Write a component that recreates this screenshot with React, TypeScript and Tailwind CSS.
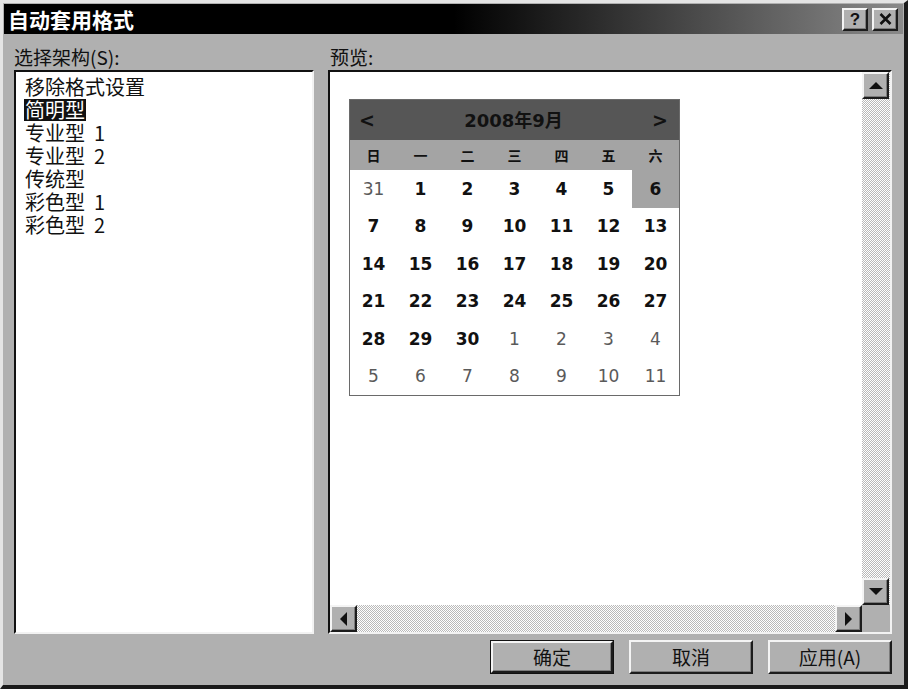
import React from 'react';

const cjk = "font-['Noto_Sans_CJK_SC',sans-serif]";
const verdana = "font-['DejaVu_Sans','Noto_Sans_CJK_SC',sans-serif]";

const schemes = ['移除格式设置', '简明型', '专业型 1', '专业型 2', '传统型', '彩色型 1', '彩色型 2'];
const weekDays = ['日', '一', '二', '三', '四', '五', '六'];

// [day, isCurrentMonth]
const weeks: [number, boolean][][] = [
  [[31, false], [1, true], [2, true], [3, true], [4, true], [5, true], [6, true]],
  [[7, true], [8, true], [9, true], [10, true], [11, true], [12, true], [13, true]],
  [[14, true], [15, true], [16, true], [17, true], [18, true], [19, true], [20, true]],
  [[21, true], [22, true], [23, true], [24, true], [25, true], [26, true], [27, true]],
  [[28, true], [29, true], [30, true], [1, false], [2, false], [3, false], [4, false]],
  [[5, false], [6, false], [7, false], [8, false], [9, false], [10, false], [11, false]],
];

const raised =
  'border-2 border-t-[#f4f4f4] border-l-[#f4f4f4] border-r-[#1c1c1c] border-b-[#1c1c1c] bg-[#b0b0b0] shadow-[inset_-1px_-1px_0_#7c7c7c]';
const sunken =
  'border-2 border-t-[#111] border-l-[#111] border-r-[#f2f2f2] border-b-[#f2f2f2]';
const track = 'bg-[repeating-conic-gradient(#b9b9b9_0_25%,#ffffff_0_50%)] bg-[length:2px_2px]';

const Tri = ({ dir }: { dir: 'up' | 'down' | 'left' | 'right' }) => {
  const pts = {
    up: '0,7 7,0 14,7',
    down: '0,0 14,0 7,7',
    left: '7,0 7,14 0,7',
    right: '0,0 0,14 7,7',
  }[dir];
  const vertical = dir === 'up' || dir === 'down';
  return (
    <svg width={vertical ? 14 : 7} height={vertical ? 7 : 14} viewBox={vertical ? '0 0 14 7' : '0 0 7 14'}>
      <polygon points={pts} fill="#111" />
    </svg>
  );
};

const ScrollBtn = ({ dir }: { dir: 'up' | 'down' | 'left' | 'right' }) => (
  <div className={`${raised} w-[27px] h-[27px] shrink-0 flex items-center justify-center`}>
    <Tri dir={dir} />
  </div>
);

const Calendar = () => (
  <div className={`w-[331px] border border-[#6a6a6a] ${verdana} text-[#111]`}>
    <div className="h-[40px] bg-[#565656] flex items-center justify-between pl-[9px] pr-[11px] font-bold">
      <span className="text-[19px]">&lt;</span>
      <span className="text-[18px]">2008年9月</span>
      <span className="text-[19px]">&gt;</span>
    </div>
    <div className="h-[30px] bg-[#a4a4a4] grid grid-cols-7 items-center">
      {weekDays.map(d => (
        <span key={d} className={`${cjk} text-center text-[14px] leading-[20px] font-bold`}>{d}</span>
      ))}
    </div>
    <div className="grid grid-cols-7 grid-rows-6 h-[225px]">
      {weeks.flat().map(([day, cur], i) => (
        <div
          key={i}
          className={`flex items-center justify-center text-[17px] leading-[20px] ${
            cur ? 'font-bold text-[#111]' : 'text-[#5a5a5a]'
          } ${i === 6 ? 'bg-[#a4a4a4]' : ''}`}
        >
          {day}
        </div>
      ))}
    </div>
  </div>
);

export default function App() {
  return (
    <div className="w-[908px] h-[689px] bg-[#b0b0b0] border-t-[3px] border-l-[3px] border-t-[#e4e4e4] border-l-[#e4e4e4] border-r-[4px] border-b-[4px] border-r-[#1a1a1a] border-b-[#1a1a1a] p-[1px] flex flex-col overflow-hidden">
      {/* Title bar */}
      <div className="h-[30px] shrink-0 bg-[linear-gradient(to_right,#000_50%,#8a8a8a)] flex items-center justify-between pl-[4px] pr-[5px]">
        <span className={`${cjk} text-white font-bold text-[21px] leading-none`}>自动套用格式</span>
        <div className="flex gap-[4px]">
          <div className={`${raised} w-[26px] h-[23px] flex items-center justify-center font-['Liberation_Sans',sans-serif] font-black text-[17px] leading-none text-[#111]`}>?</div>
          <div className={`${raised} w-[26px] h-[23px] flex items-center justify-center`}>
            <svg width="13" height="12" viewBox="0 0 13 12">
              <path d="M1.5 1 L11.5 11 M11.5 1 L1.5 11" stroke="#111" strokeWidth="2.6" />
            </svg>
          </div>
        </div>
      </div>

      <div className={`flex-1 flex flex-col pl-[10px] pr-[11px] ${cjk} text-[#111]`}>
        {/* Labels */}
        <div className="h-[36px] flex items-end pb-[2px] text-[19px] leading-[22px]">
          <span className="w-[314px]">选择架构(S):</span>
          <span className="pl-[2px]">预览:</span>
        </div>

        {/* Main panes */}
        <div className="h-[564px] flex gap-[14px]">
          <div className={`w-[300px] bg-white ${sunken} pt-[4px] pl-[8px]`}>
            {schemes.map((s, i) => (
              <div key={s} className="h-[23px] text-[20px] leading-[22px] whitespace-pre">
                <span className={`inline-block px-[1px] ${i === 1 ? 'bg-[#111] text-white' : ''}`}>
                  {s.replace(' ', '  ')}
                </span>
              </div>
            ))}
          </div>

          <div className={`flex-1 ${sunken} bg-[#b0b0b0] flex flex-col`}>
            <div className="flex-1 flex min-h-0">
              <div className="flex-1 bg-white pl-[19px] pt-[27px]">
                <Calendar />
              </div>
              <div className={`w-[28px] flex flex-col ${track}`}>
                <ScrollBtn dir="up" />
                <div className="flex-1" />
                <ScrollBtn dir="down" />
              </div>
            </div>
            <div className="h-[27px] flex">
              <div className={`flex-1 flex ${track}`}>
                <ScrollBtn dir="left" />
                <div className="flex-1" />
                <ScrollBtn dir="right" />
              </div>
              <div className="w-[28px] bg-[#b0b0b0]" />
            </div>
          </div>
        </div>

        {/* Buttons */}
        <div className="mt-[6px] flex justify-end gap-[15px] text-[19px]">
          <div className="border border-[#111]">
            <div className={`${raised} w-[122px] h-[32px] flex items-center justify-center`}>确定</div>
          </div>
          <div className={`${raised} w-[124px] h-[34px] flex items-center justify-center`}>取消</div>
          <div className={`${raised} w-[124px] h-[34px] flex items-center justify-center`}>应用(A)</div>
        </div>
      </div>
    </div>
  );
}
